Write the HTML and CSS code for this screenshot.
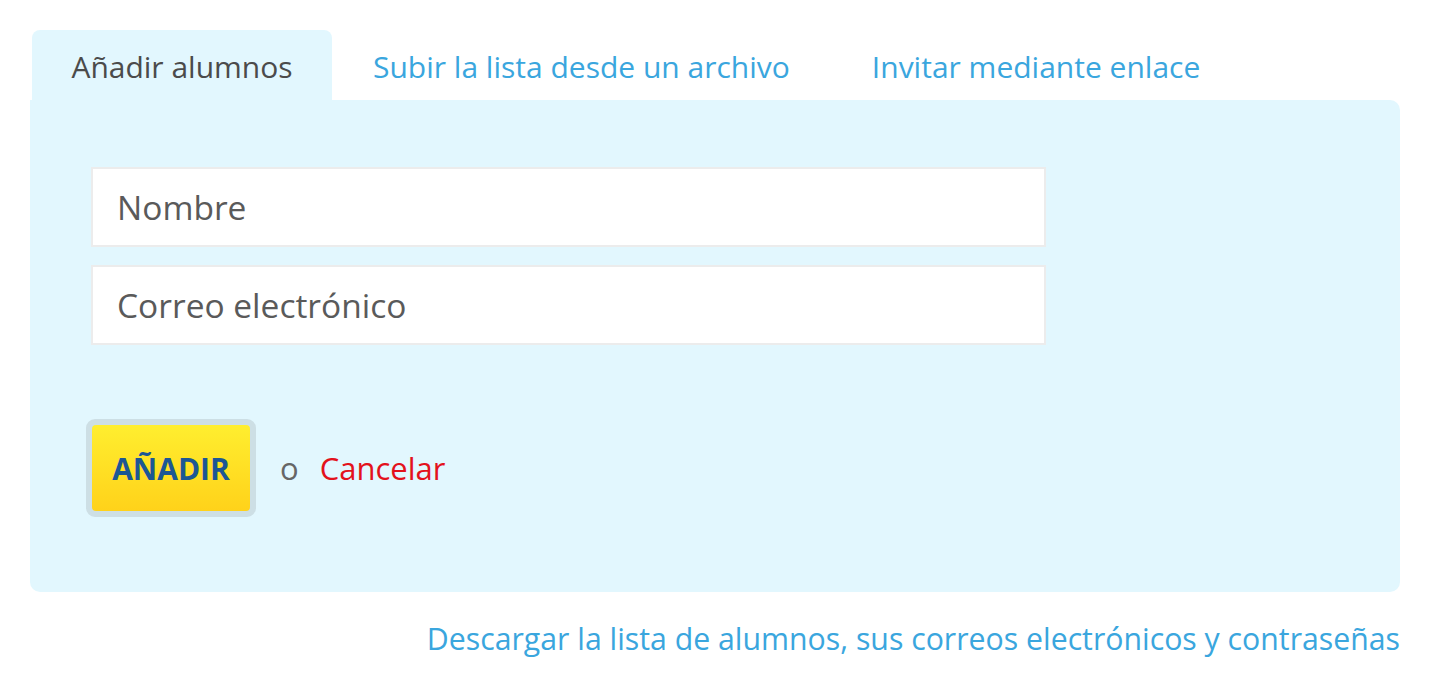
FILE: index.html
```html
<!DOCTYPE html>
<html lang="es">
<head>
<meta charset="utf-8">
<title>Añadir alumnos</title>
<link rel="stylesheet" href="styles.css">
</head>
<body>
<div class="wrap">
  <nav class="tabs">
    <span class="tab tab-active">Añadir alumnos</span>
    <a class="tab" href="#">Subir la lista desde un archivo</a>
    <a class="tab" href="#">Invitar mediante enlace</a>
  </nav>
  <section class="panel">
    <form class="form">
      <input class="field" type="text" placeholder="Nombre">
      <input class="field" type="text" placeholder="Correo electrónico">
      <div class="actions">
        <button class="btn" type="button"><span class="btn-inner">AÑADIR</span></button>
        <span class="or">o</span>
        <a class="cancel" href="#">Cancelar</a>
      </div>
    </form>
  </section>
  <div class="footer">
    <a class="download" href="#">Descargar la lista de alumnos, sus correos electrónicos y contraseñas</a>
  </div>
</div>
</body>
</html>
```

FILE: styles.css
```css
* { box-sizing: border-box; }
html, body { margin: 0; padding: 0; background: #fff; }
body {
  font-family: "Open Sans", "Lato", sans-serif;
  color: #4a4a4a;
}
a { text-decoration: none; }
.wrap {
  padding: 30px 30px 0 30px;
  width: 1430px;
}
.tabs {
  display: flex;
  align-items: flex-end;
  height: 70px;
  padding-left: 2px;
}
.tab {
  font-size: 30px;
  height: 70px;
  line-height: 66px;
  padding: 4px 41px 0 41px;
  color: #3aa6de;
  white-space: nowrap;
}
.tab-active {
  background: #e2f7fe;
  color: #4b4b4b;
  border-radius: 8px 8px 0 0;
  width: 300px;
  text-align: center;
  padding: 4px 0 0 0;
}
.panel {
  background: #e2f7fe;
  border-radius: 0 10px 10px 10px;
  height: 492px;
  padding: 67px 60px 0 61px;
}
.form {
  display: flex;
  flex-direction: column;
  gap: 18px;
}
.field {
  width: 955px;
  height: 80px;
  border: 2px solid #ececec;
  background: #fff;
  font-family: inherit;
  font-size: 33.5px;
  padding: 0 0 0 24px;
  color: #555;
  outline: none;
}
.field::placeholder { color: #5a5a5a; opacity: 1; }
.actions {
  display: flex;
  align-items: center;
  margin-top: 56px;
  margin-left: -5px;
}
.btn {
  padding: 0;
  border: 6px solid #cddfe5;
  border-radius: 9px;
  background: #cddfe5;
  width: 170px;
  height: 98px;
  cursor: pointer;
  font-family: inherit;
}
.btn-inner {
  display: flex;
  align-items: center;
  justify-content: center;
  width: 100%;
  height: 100%;
  border-radius: 4px;
  background: linear-gradient(#ffee2f, #ffd21a);
  color: #1c5794;
  font-weight: 700;
  font-size: 30px;
  padding-top: 1px;
}
.or {
  font-size: 31px;
  color: #666;
  margin-left: 24px;
}
.cancel {
  font-size: 31px;
  color: #e3121c;
  margin-left: 21px;
}
.footer {
  display: flex;
  justify-content: flex-end;
  padding-top: 26px;
}
.download {
  font-size: 30.25px;
  color: #3aa6de;
  white-space: nowrap;
}
```
